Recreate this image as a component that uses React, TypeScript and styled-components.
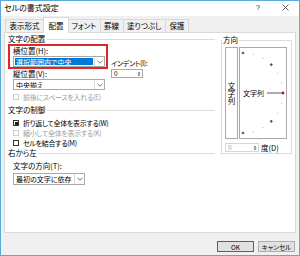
import React from 'react';
import styled, { createGlobalStyle } from 'styled-components';

const GlobalStyle = createGlobalStyle`
  html, body { margin: 0; padding: 0; background: #fff; }
  body {
    font-family: "Noto Sans CJK JP", "DejaVu Sans", sans-serif;
    font-size: 7.5px;
    color: #000;
    font-feature-settings: "palt" 1;
  }
`;

const Window = styled.div`
  width: 300px;
  height: 256px;
  box-sizing: border-box;
  border: 1px solid #5aa8dc;
  background: #f0f0f0;
  display: flex;
  flex-direction: column;
  overflow: hidden;
`;

const TitleBar = styled.div`
  height: 15px;
  flex-shrink: 0;
  background: #fff;
  display: flex;
  align-items: center;
  padding: 0 0 2px 3px;
  box-sizing: border-box;
`;

const Title = styled.div`
  flex: 1;
  line-height: 10px;
  font-size: 8px;
`;

const TitleButton = styled.div<{ w: number }>`
  width: ${p => p.w}px;
  display: flex;
  justify-content: center;
  align-items: center;
  font-family: "Liberation Sans", sans-serif;
  font-size: 8px;
  color: #333;
`;

const TabRow = styled.div`
  height: 16px;
  flex-shrink: 0;
  display: flex;
  align-items: flex-end;
  padding-left: 4px;
`;

const Tab = styled.div<{ active?: boolean }>`
  box-sizing: border-box;
  height: ${p => (p.active ? 16 : 13)}px;
  padding: 0 ${p => (p.active ? 4.5 : 3.5)}px;
  margin: 0 ${p => (p.active ? -1 : 0)}px -${p => (p.active ? 1 : 0)}px -1px;
  border: 1px solid #d9d9d9;
  border-bottom: none;
  background: ${p => (p.active ? '#fff' : '#f0f0f0')};
  position: relative;
  z-index: ${p => (p.active ? 1 : 0)};
  display: flex;
  align-items: center;
  line-height: 10px;
  &:first-child { margin-left: 0; }
`;

const Panel = styled.div`
  height: 201px;
  flex-shrink: 0;
  box-sizing: border-box;
  margin: 0 3px;
  background: #fff;
  border: 1px solid #d9d9d9;
  display: grid;
  grid-template-columns: 216px 71px;
  align-items: start;
`;

const LeftColumn = styled.div`
  padding: 1px 6px 0 3px;
  display: flex;
  flex-direction: column;
`;

const GroupHeader = styled.div<{ mt?: number }>`
  display: flex;
  align-items: center;
  gap: 2px;
  height: 10px;
  line-height: 10px;
  margin-top: ${p => p.mt ?? 0}px;
  &::after {
    content: '';
    flex: 1;
    height: 1px;
    background: #dcdcdc;
  }
`;

const TopRow = styled.div`
  display: flex;
  align-items: flex-start;
`;

const LeftStack = styled.div`
  width: 100px;
  display: flex;
  flex-direction: column;
`;

const RedFrame = styled.div`
  height: 25px;
  box-sizing: border-box;
  border: 2px solid #e2252b;
  padding: 0 2px 0 3px;
  display: flex;
  flex-direction: column;
`;

const Label = styled.div<{ h?: number; indent?: number; mt?: number; tight?: boolean }>`
  height: ${p => p.h ?? 10}px;
  line-height: ${p => p.h ?? 10}px;
  margin-left: ${p => p.indent ?? 0}px;
  margin-top: ${p => p.mt ?? 0}px;
  font-size: ${p => (p.tight ? 7 : 7.5)}px;
  letter-spacing: ${p => (p.tight ? -0.3 : 0)}px;
  white-space: nowrap;
`;

const SelectBox = styled.div<{ w: number; h?: number; mt?: number; indent?: number }>`
  width: ${p => p.w}px;
  height: ${p => p.h ?? 11}px;
  margin-top: ${p => p.mt ?? 0}px;
  margin-left: ${p => p.indent ?? 0}px;
  box-sizing: border-box;
  border: 1px solid #a9a9a9;
  background: #fff;
  display: flex;
  align-items: stretch;
  font-size: 7px;
`;

const SelectValue = styled.div<{ highlighted?: boolean }>`
  flex: 1;
  margin: 1px;
  padding-left: 1px;
  display: flex;
  align-items: center;
  background: ${p => (p.highlighted ? '#0078d7' : 'transparent')};
  color: ${p => (p.highlighted ? '#fff' : '#000')};
  white-space: nowrap;
  overflow: hidden;
`;

const SelectArrow = styled.div`
  width: 9px;
  border-left: 1px solid #dadada;
  display: flex;
  align-items: center;
  justify-content: center;
`;

const IndentStack = styled.div`
  margin-left: 3px;
  padding-top: 14px;
  display: flex;
  flex-direction: column;
`;

const SpinBox = styled.div<{ w: number; disabled?: boolean; mt?: number }>`
  width: ${p => p.w}px;
  height: 9px;
  margin-top: ${p => p.mt ?? 0}px;
  box-sizing: border-box;
  border: 1px solid ${p => (p.disabled ? '#d6d6d6' : '#a9a9a9')};
  background: #fff;
  display: flex;
  font-size: 6.5px;
  color: ${p => (p.disabled ? '#a0a0a0' : '#000')};
`;

const SpinValue = styled.div`
  flex: 1;
  padding-left: 2px;
  line-height: 7px;
`;

const SpinArrows = styled.div`
  width: 6px;
  display: flex;
  align-items: center;
  justify-content: center;
`;

const CheckRow = styled.div<{ mt?: number; disabled?: boolean }>`
  height: 10px;
  margin-top: ${p => p.mt ?? 0}px;
  margin-left: 5px;
  display: flex;
  align-items: center;
  gap: 4px;
  line-height: 10px;
  font-size: 7px;
  letter-spacing: -0.3px;
  white-space: nowrap;
  color: ${p => (p.disabled ? '#a0a0a0' : '#000')};
`;

const CheckBox = styled.div<{ checked?: boolean; disabled?: boolean }>`
  width: 6px;
  height: 6px;
  box-sizing: border-box;
  border: 1px solid ${p => (p.disabled ? '#cccccc' : '#333')};
  background: #fff;
  display: flex;
  align-items: center;
  justify-content: center;
  &::after {
    content: '';
    width: 3px;
    height: 3px;
    background: ${p => (p.checked ? '#222' : 'transparent')};
  }
`;

const OrientationGroup = styled.fieldset`
  margin: 2px 0 0 0;
  padding: 2px 4px 1px 3px;
  border: 1px solid #dcdcdc;
  min-width: 0;
`;

const Legend = styled.legend`
  padding: 0 1px;
  margin-left: -3px;
  line-height: 10px;
`;

const OrientationRow = styled.div`
  display: flex;
  gap: 1px;
`;

const VerticalTextBox = styled.div`
  width: 13px;
  height: 92px;
  box-sizing: border-box;
  border: 1px solid #a9a9a9;
  display: flex;
  align-items: center;
  justify-content: center;
  writing-mode: vertical-rl;
  text-orientation: upright;
`;

const DialBox = styled.div`
  width: 48px;
  height: 92px;
  box-sizing: border-box;
  border: 1px solid #a9a9a9;
  display: flex;
`;

const DegreeRow = styled.div`
  display: flex;
  align-items: center;
  gap: 2px;
  margin-top: 4px;
  line-height: 9px;
`;

const ButtonBar = styled.div`
  flex: 1;
  display: flex;
  justify-content: flex-end;
  align-items: flex-start;
  gap: 4px;
  padding: 8px 4px 0 0;
`;

const Button = styled.div<{ primary?: boolean }>`
  width: 37px;
  height: 11px;
  box-sizing: border-box;
  border: 1px solid ${p => (p.primary ? '#0078d7' : '#adadad')};
  background: #e1e1e1;
  display: flex;
  align-items: center;
  justify-content: center;
  font-size: 6.5px;
`;

const Chevron = () => (
  <svg width="6" height="4" viewBox="0 0 6 4">
    <polyline points="0.5,0.8 3,3.2 5.5,0.8" fill="none" stroke="#666" strokeWidth="0.9" />
  </svg>
);

const SpinArrowIcon = () => (
  <svg width="4" height="6" viewBox="0 0 4 6">
    <polygon points="0.5,2.4 2,0.8 3.5,2.4" fill="#555" />
    <polygon points="0.5,3.6 2,5.2 3.5,3.6" fill="#555" />
  </svg>
);

const CloseIcon = () => (
  <svg width="7" height="7" viewBox="0 0 7 7">
    <path d="M0.5 0.5 L6.5 6.5 M6.5 0.5 L0.5 6.5" stroke="#333" strokeWidth="0.8" />
  </svg>
);

const Select = ({ value, w, h, mt, indent, highlighted }: {
  value: string; w: number; h?: number; mt?: number; indent?: number; highlighted?: boolean;
}) => (
  <SelectBox w={w} h={h} mt={mt} indent={indent}>
    <SelectValue highlighted={highlighted}>{value}</SelectValue>
    <SelectArrow><Chevron /></SelectArrow>
  </SelectBox>
);

const Spinner = ({ w, disabled, mt }: { w: number; disabled?: boolean; mt?: number }) => (
  <SpinBox w={w} disabled={disabled} mt={mt}>
    <SpinValue>0</SpinValue>
    <SpinArrows><SpinArrowIcon /></SpinArrows>
  </SpinBox>
);

const Dial = () => {
  const cx = 3, cy = 45, r = 40;
  const marks: React.ReactNode[] = [];
  for (let a = -90; a <= 90; a += 15) {
    const rad = (a * Math.PI) / 180;
    const x = cx + r * Math.cos(rad);
    const y = cy - r * Math.sin(rad);
    if (a === 0) continue;
    if (a % 45 === 0) {
      marks.push(
        <polygon key={a} points={`${x},${y - 1.6} ${x + 1.6},${y} ${x},${y + 1.6} ${x - 1.6},${y}`} fill="#555" />
      );
    } else {
      marks.push(<circle key={a} cx={x} cy={y} r={0.55} fill="#b0b0b0" />);
    }
  }
  const rx = cx + r;
  return (
    <svg width="46" height="90" viewBox="0 0 46 90">
      {marks}
      <text x="3" y="48" fontSize="7" fontFamily='"Noto Sans CJK JP", sans-serif' fill="#000">文字列</text>
      <line x1="27" y1={cy} x2={rx} y2={cy} stroke="#333" strokeWidth="0.8" />
      <polygon points={`${rx},${cy - 1.7} ${rx + 1.7},${cy} ${rx},${cy + 1.7} ${rx - 1.7},${cy}`} fill="#8b1a2e" />
    </svg>
  );
};

const tabs = ['表示形式', '配置', 'フォント', '罫線', '塗りつぶし', '保護'];

const App = () => (
  <>
    <GlobalStyle />
    <Window>
      <TitleBar>
        <Title>セルの書式設定</Title>
        <TitleButton w={28}>?</TitleButton>
        <TitleButton w={27}><CloseIcon /></TitleButton>
      </TitleBar>
      <TabRow>
        {tabs.map(t => (
          <Tab key={t} active={t === '配置'}>{t}</Tab>
        ))}
      </TabRow>
      <Panel>
        <LeftColumn>
          <GroupHeader>文字の配置</GroupHeader>
          <TopRow>
            <LeftStack>
              <RedFrame>
                <Label h={10}>横位置(H):</Label>
                <Select value="選択範囲内で中央" w={92} highlighted />
              </RedFrame>
              <Label h={10} indent={5}>縦位置(V):</Label>
              <Select value="中央揃え" w={92} indent={5} />
            </LeftStack>
            <IndentStack>
              <Label h={10} tight>インデント(I):</Label>
              <Spinner w={32} mt={1} />
            </IndentStack>
          </TopRow>
          <CheckRow mt={2} disabled>
            <CheckBox disabled />
            前後にスペースを入れる(E)
          </CheckRow>
          <GroupHeader mt={3}>文字の制御</GroupHeader>
          <CheckRow mt={3}>
            <CheckBox checked />
            折り返して全体を表示する(W)
          </CheckRow>
          <CheckRow disabled>
            <CheckBox disabled />
            縮小して全体を表示する(K)
          </CheckRow>
          <CheckRow>
            <CheckBox />
            セルを結合する(M)
          </CheckRow>
          <GroupHeader>右から左</GroupHeader>
          <Label h={10} indent={5} mt={3}>文字の方向(T):</Label>
          <Select value="最初の文字に依存" w={72} h={12} mt={2} indent={5} />
        </LeftColumn>
        <OrientationGroup>
          <Legend>方向</Legend>
          <OrientationRow>
            <VerticalTextBox>文字列</VerticalTextBox>
            <DialBox><Dial /></DialBox>
          </OrientationRow>
          <DegreeRow>
            <Spinner w={34} disabled />
            <span>度(D)</span>
          </DegreeRow>
        </OrientationGroup>
      </Panel>
      <ButtonBar>
        <Button primary>OK</Button>
        <Button>キャンセル</Button>
      </ButtonBar>
    </Window>
  </>
);

export default App;
